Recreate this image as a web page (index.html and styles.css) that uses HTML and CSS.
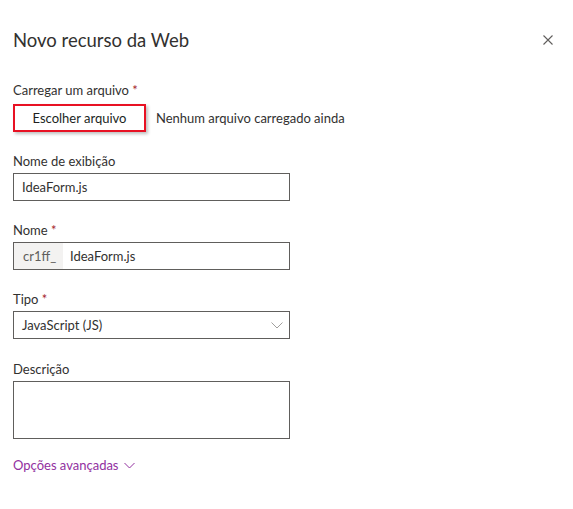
FILE: index.html
```html
<!DOCTYPE html>
<html lang="pt-BR">
<head>
<meta charset="utf-8">
<title>Novo recurso da Web</title>
<link rel="stylesheet" href="styles.css">
</head>
<body>
<div class="panel">
  <div class="header">
    <h1 class="title">Novo recurso da Web</h1>
    <button class="close" aria-label="Fechar">
      <svg width="10" height="10" viewBox="0 0 10 10"><path d="M0.5 0.5L9.5 9.5M9.5 0.5L0.5 9.5" stroke="#605e5c" stroke-width="1.1" fill="none"/></svg>
    </button>
  </div>

  <div class="field first">
    <label class="label">Carregar um arquivo <span class="req">*</span></label>
    <div class="upload-row">
      <button class="choose">Escolher arquivo</button>
      <span class="upload-note">Nenhum arquivo carregado ainda</span>
    </div>
  </div>

  <div class="field">
    <label class="label">Nome de exibição</label>
    <div class="input"><span class="value">IdeaForm.js</span></div>
  </div>

  <div class="field">
    <label class="label">Nome <span class="req">*</span></label>
    <div class="input prefixed"><span class="prefix">cr1ff_</span><span class="value">IdeaForm.js</span></div>
  </div>

  <div class="field">
    <label class="label">Tipo <span class="req">*</span></label>
    <div class="input select"><span class="value">JavaScript (JS)</span>
      <svg class="chev" width="12" height="7" viewBox="0 0 12 7"><path d="M0.5 0.5L6 6L11.5 0.5" stroke="#a19f9d" stroke-width="1" fill="none"/></svg>
    </div>
  </div>

  <div class="field last">
    <label class="label">Descrição</label>
    <div class="input textarea"></div>
  </div>

  <a class="advanced" href="#">Opções avançadas
    <svg width="11" height="7" viewBox="0 0 11 7"><path d="M0.5 1L5.5 6L10.5 1" stroke="#92309f" stroke-width="1" fill="none"/></svg>
  </a>
</div>
</body>
</html>
```
FILE: styles.css
```css
html, body {
  margin: 0;
  padding: 0;
  background: #ffffff;
}
body {
  font-family: Lato, "Open Sans", sans-serif;
  font-size: 13px;
  color: #323130;
}
.panel {
  padding: 26px 13px 0 13px;
}
.header {
  display: flex;
  align-items: center;
  justify-content: space-between;
  height: 28px;
}
.title {
  margin: 0;
  font-size: 18.5px;
  font-weight: 400;
  line-height: 28px;
  color: #323130;
}
.close {
  border: 0;
  background: none;
  padding: 0;
  margin-right: 7px;
  width: 10px;
  height: 10px;
  display: flex;
}
.field {
  margin-top: 18px;
  width: 277px;
}
.field.first {
  margin-top: 25px;
  width: auto;
}
.field.last {
  margin-top: 19px;
}
.label {
  display: block;
  line-height: 20px;
  font-weight: 400;
  margin-bottom: 2px;
  padding-top: 1px;
}
.first .label {
  margin-bottom: 4px;
}
.req {
  color: #a4262c;
  font-weight: 400;
}
.upload-row {
  display: flex;
  align-items: center;
  height: 28px;
}
.choose {
  box-sizing: border-box;
  height: 28px;
  width: 133px;
  border: 2px solid #e81123;
  background: #fff;
  box-shadow: 2px 2px 3px rgba(0,0,0,0.25);
  font-family: inherit;
  font-size: 13px;
  font-weight: 400;
  color: #201f1e;
  padding: 0;
}
.upload-note {
  margin-left: 10px;
}
.input {
  box-sizing: border-box;
  height: 28px;
  border: 1px solid #605e5c;
  display: flex;
  align-items: center;
  padding: 0 8px;
}
.prefixed {
  padding: 0;
}
.prefix {
  background: #f3f2f1;
  color: #605e5c;
  height: 100%;
  display: flex;
  align-items: center;
  padding: 0 9px;
  width: 49px;
  box-sizing: border-box;
}
.prefixed .value {
  margin-left: 7px;
}
.select {
  justify-content: space-between;
  padding-right: 6px;
}
.textarea {
  height: 58px;
}
.advanced {
  display: inline-flex;
  align-items: center;
  gap: 5px;
  margin-top: 16px;
  line-height: 20px;
  color: #92309f;
  text-decoration: none;
}
```
